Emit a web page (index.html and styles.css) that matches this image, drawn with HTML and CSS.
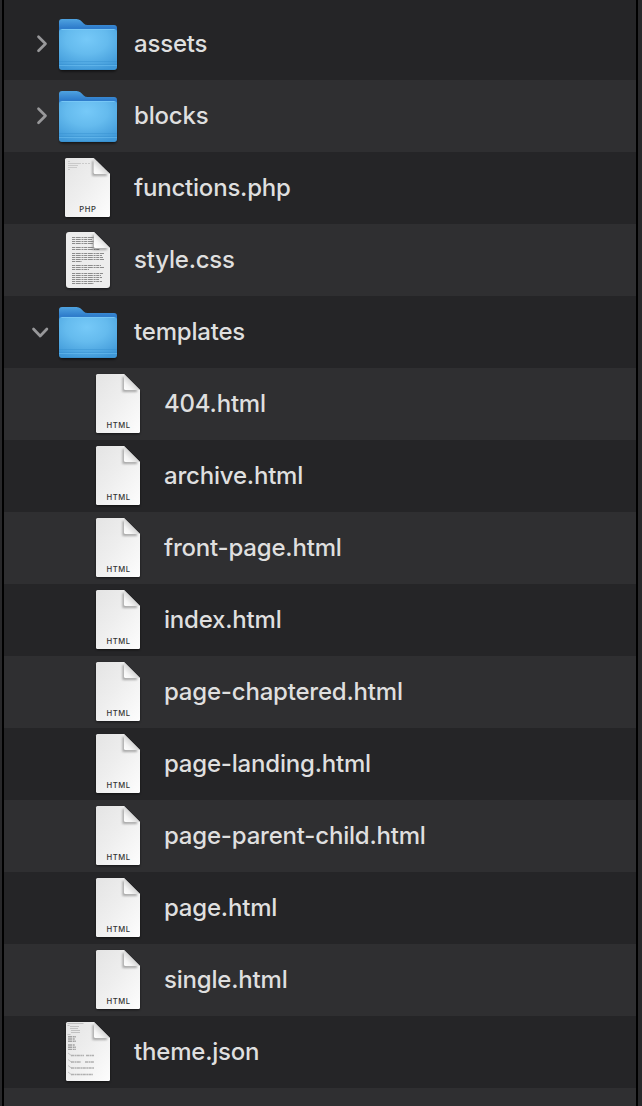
FILE: index.html
```html
<!DOCTYPE html>
<html lang="en">
<head>
<meta charset="utf-8">
<title>Theme files</title>
<link rel="stylesheet" href="styles.css">
</head>
<body>
<svg class="defs" aria-hidden="true">
  <defs>
    <linearGradient id="back" x1="0" y1="0" x2="0" y2="1"><stop offset="0" stop-color="#4fa3e0"/><stop offset=".3" stop-color="#2f7dcc"/><stop offset="1" stop-color="#2f7dcc"/></linearGradient>
    <radialGradient id="front" cx=".48" cy=".25" r=".8"><stop offset="0" stop-color="#76c9f8"/><stop offset=".45" stop-color="#65bbee"/><stop offset="1" stop-color="#3f98d8"/></radialGradient>
    <linearGradient id="paper" x1="0" y1="0" x2="1" y2="1"><stop offset="0" stop-color="#e4e4e4"/><stop offset=".45" stop-color="#eeeeee"/><stop offset="1" stop-color="#fdfdfd"/></linearGradient>
    <linearGradient id="curl" gradientUnits="userSpaceOnUse" x1="36" y1="22" x2="44" y2="14"><stop offset="0" stop-color="#fff"/><stop offset=".5" stop-color="#f4f4f4"/><stop offset="1" stop-color="#d6d6d6"/></linearGradient>
    <filter id="soft" x="-30%" y="-30%" width="160%" height="160%"><feGaussianBlur stdDeviation="1"/></filter>
    <symbol id="folder" viewBox="0 0 60 72">
      <rect x="1.5" y="30" width="57" height="33.5" rx="3" fill="#000" opacity=".55" filter="url(#soft)"/>
      <path d="M1 14q0-3 3-3h14.500q2.500 0 4.200 1.600l3 2.800q1.600 1.600 4 1.600H56q3 0 3 3v20H1z" fill="url(#back)"/>
      <rect x="1" y="21" width="58" height="41" rx="3" fill="url(#front)"/>
      <path d="M3.500 21.500h53" stroke="#7ccbf8" stroke-width="1" opacity=".8"/>
      <path d="M1 53.500h58M1 56.500h58" stroke="#348fcf" stroke-width="1" opacity=".4"/>
      <path d="M1 57.500h58" stroke="#70c2f3" stroke-width="1" opacity=".5"/>
      <path d="M3.500 61.500h53" stroke="#338bc9" stroke-width="1" opacity=".5"/>
    </symbol>
    <symbol id="page" viewBox="0 0 60 72">
      <path d="M10 7h25l17 17v39q0 3-2 3H10q-2 0-2-3V9z" fill="#000" opacity=".55" filter="url(#soft)"/>
      <path d="M9.500 6H36l16 16v41.500q0 1.500-1.500 1.500h-41Q8 65 8 63.500v-56Q8 6 9.500 6z" fill="url(#paper)"/>
      <path d="M36 9v13.500H49" fill="none" stroke="#000" stroke-width="3" opacity=".3" filter="url(#soft)"/>
      <path d="M36 6l16 16H37.500Q36 22 36 20.500z" fill="url(#curl)"/>
    </symbol>
    <symbol id="html" viewBox="0 0 60 72">
      <use href="#page" width="60" height="72"/>
      <text x="30.200" y="60" class="kind" textLength="23.500">HTML</text>
    </symbol>
    <symbol id="php" viewBox="0 0 60 72">
      <svg x="-1.180" y="0" width="61.360" height="72" viewBox="0 0 60 72" preserveAspectRatio="none"><use href="#page" width="60" height="72"/></svg>
      <g stroke="#b5b5b5" stroke-width=".6"><path d="M10 9.500h2M10 11.500h13M10 13.500h10M10 15.500h9M10 17.500h2"/><path d="M24 11.500h9" stroke-dasharray="2 1"/></g>
      <text x="29.500" y="60" class="kind" textLength="16.500">PHP</text>
    </symbol>
    <symbol id="css" viewBox="0 0 60 72">
      <path d="M11 9h25l16 16v37q0 3-3 3H11q-3 0-3-3z" fill="#000" opacity=".55" filter="url(#soft)"/>
      <path d="M11 8h25l16 16v37q0 3-3 3H11q-3 0-3-3V11q0-3 3-3z" fill="#ededed"/>
      <g fill="none" stroke="#8c8c8c" stroke-width="1.050" stroke-dasharray="3 .7 5 .8 2 .6">
        <path d="M14 13.500h22M14 15.500h20M14 17.500h22M14 19.500h21M14 23.500h22M14 25.500h28M14 29.500h32M14 31.500h30M14 33.500h31M14 35.500h32M14 37.500h10M14 41.500h29M14 43.500h32M14 45.500h17M14 49.500h31M14 51.500h29M14 53.500h30M14 55.500h27M14 57.500h30M14 59.500h22"/>
      </g>
      <path d="M36 11v13.500H49" fill="none" stroke="#000" stroke-width="3" opacity=".3" filter="url(#soft)"/>
      <path d="M36 8l16 16H37.500Q36 24 36 22.500z" fill="url(#curl)"/>
    </symbol>
    <symbol id="json" viewBox="0 0 60 72">
      <use href="#page" width="60" height="72"/>
      <g fill="none" stroke="#b0b0b0" stroke-width=".7">
        <path d="M9.500 7.500h16M9.500 9.500h2M12 10.500h9M12 12.500h8M13 14.500h9M13 16.500h9M9.500 18.500h3"/>
        <path d="M10 20.800h8M10 23h7M10 25.200h8M10 29h7M10 31.200h8M10 33.400h8" stroke="#a2a2a2" stroke-width="1.400" stroke-dasharray="4 .7 2 .5"/>
        <path d="M10 37l4 3M10 43.500l4 3M10 49.500l4 3M10 56l4 3"/>
        <path d="M13 39.500h13M28 39.500h8M13 46h10M27 46h9M13 52h23M13 58.500h22" stroke-width="1.600" stroke-dasharray="3 .5 2 .4"/>
      </g>
    </symbol>
    <symbol id="closed" viewBox="0 0 20 72"><path d="M5.500 28.700l7 7-7 7" class="chevron"/></symbol>
    <symbol id="open" viewBox="0 0 20 72"><path d="M.5 33l6.700 7 6.700-7" class="chevron"/></symbol>
  </defs>
</svg>
<main class="list">
  <div class="row"><svg class="toggle"><use href="#closed"/></svg><svg class="icon"><use href="#folder"/></svg><span class="name">assets</span></div>
  <div class="row"><svg class="toggle"><use href="#closed"/></svg><svg class="icon"><use href="#folder"/></svg><span class="name">blocks</span></div>
  <div class="row"><span class="toggle"></span><svg class="icon"><use href="#php"/></svg><span class="name">functions.php</span></div>
  <div class="row"><span class="toggle"></span><svg class="icon"><use href="#css"/></svg><span class="name">style.css</span></div>
  <div class="row"><svg class="toggle"><use href="#open"/></svg><svg class="icon"><use href="#folder"/></svg><span class="name">templates</span></div>
  <div class="row nested"><span class="toggle"></span><svg class="icon"><use href="#html"/></svg><span class="name">404.html</span></div>
  <div class="row nested"><span class="toggle"></span><svg class="icon"><use href="#html"/></svg><span class="name">archive.html</span></div>
  <div class="row nested"><span class="toggle"></span><svg class="icon"><use href="#html"/></svg><span class="name">front-page.html</span></div>
  <div class="row nested"><span class="toggle"></span><svg class="icon"><use href="#html"/></svg><span class="name">index.html</span></div>
  <div class="row nested"><span class="toggle"></span><svg class="icon"><use href="#html"/></svg><span class="name">page-chaptered.html</span></div>
  <div class="row nested"><span class="toggle"></span><svg class="icon"><use href="#html"/></svg><span class="name">page-landing.html</span></div>
  <div class="row nested"><span class="toggle"></span><svg class="icon"><use href="#html"/></svg><span class="name">page-parent-child.html</span></div>
  <div class="row nested"><span class="toggle"></span><svg class="icon"><use href="#html"/></svg><span class="name">page.html</span></div>
  <div class="row nested"><span class="toggle"></span><svg class="icon"><use href="#html"/></svg><span class="name">single.html</span></div>
  <div class="row"><span class="toggle"></span><svg class="icon"><use href="#json"/></svg><span class="name">theme.json</span></div>
  <div class="row"></div>
</main>
</body>
</html>
```

FILE: styles.css
```css
* { box-sizing: border-box; }
body { margin: 0; background: #28282a; font-family: Inter, "Liberation Sans", sans-serif; }
.defs { position: absolute; width: 0; height: 0; }
.list {
  width: 636px;
  height: 1106px;
  margin-left: 2px;
  padding-top: 8px;
  border: solid #000;
  border-width: 0 2px;
  background: #252527;
  overflow: hidden;
}
.row { display: flex; height: 72px; padding-left: 29px; background: #252527; }
.row:nth-child(even) { background: #2f2f31; }
.nested { padding-left: 59px; }
.toggle { flex: none; width: 20px; height: 72px; margin-right: 5px; }
#open, #closed { overflow: visible; }
.toggle { overflow: visible; }
.icon { flex: none; width: 60px; height: 72px; margin-right: 16px; }
.name {
  color: #dfdfdf;
  font-size: 24px;
  font-weight: 500;
  letter-spacing: -0.2px;
  line-height: 71px;
  white-space: nowrap;
}
.chevron { fill: none; stroke: #98989a; stroke-width: 2.7; stroke-linecap: round; stroke-linejoin: round; }
.kind { font: 500 7.6px Inter, sans-serif; fill: #333; text-anchor: middle; }
```
